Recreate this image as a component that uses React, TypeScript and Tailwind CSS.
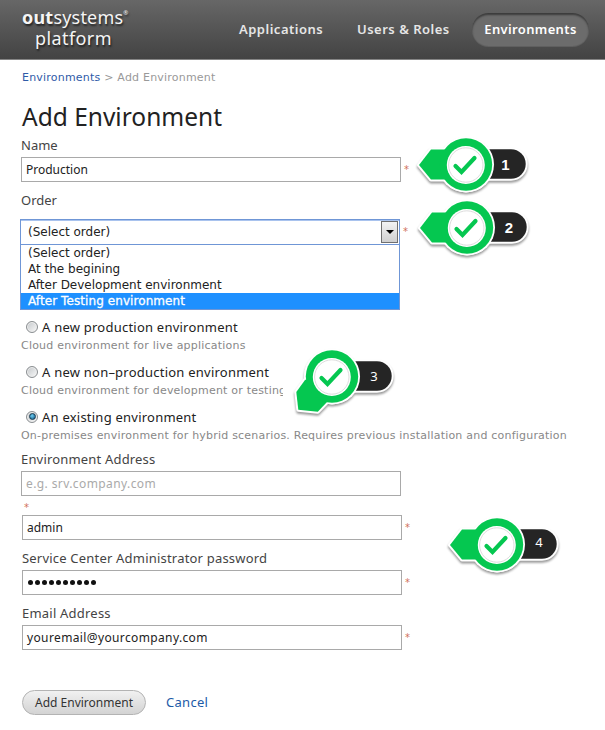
import type { ReactNode } from "react";

const humanist = "font-['Noto_Sans','Open_Sans',sans-serif]";
const verdana = "font-['DejaVu_Sans',sans-serif]";

function Star({ className = "" }: { className?: string }) {
  return <span className={`font-['DejaVu_Sans',sans-serif] text-[10px] leading-3 text-[#d0705a] ${className}`}>*</span>;
}

function Label({ children, className }: { children: ReactNode; className: string }) {
  return <label className={`block h-5 whitespace-nowrap text-[13px] leading-[18px] text-[#444] ${humanist} ${className}`}>{children}</label>;
}

function Field({ value, className, star = true }: { value: ReactNode; className: string; star?: boolean }) {
  return (
    <div className={`flex h-[25px] items-center ${className}`}>
      <div className={`flex h-[25px] w-[380px] items-center border border-[#a9a9a9] bg-white pl-1 text-[12px] whitespace-nowrap text-[#222] ${humanist}`}>
        {value}
      </div>
      {star && <Star className="ml-[3px]" />}
    </div>
  );
}

function Radio({ checked = false }: { checked?: boolean }) {
  return (
    <span className="flex size-3 shrink-0 items-center justify-center rounded-full border border-[#8a8e91] bg-linear-to-br from-[#c3c7ca] to-[#fafafa] shadow-[inset_0_0_0_1px_#eee]">
      {checked && <span className="size-[7px] rounded-full border border-[#15394f] bg-radial-[at_40%_35%] from-[#6fd0f4] to-[#0b4f7d]" />}
    </span>
  );
}

function Choice({ title, hint, checked, hintClass = "" }: { title: string; hint: string; checked?: boolean; hintClass?: string }) {
  return (
    <div className="h-[45px]">
      <div className="flex h-5 items-center pl-[5px]">
        <span className="-mt-[3px] flex"><Radio checked={checked} /></span>
        <span className={`-mt-[2px] ml-1 text-[13px] leading-5 tracking-[0.23px] whitespace-nowrap text-[#222] ${humanist}`}>{title}</span>
      </div>
      <div className={`h-4 overflow-hidden text-[11px] leading-4 tracking-[0.21px] whitespace-nowrap text-[#888] ${verdana} ${hintClass}`}>{hint}</div>
    </div>
  );
}

const arrowLeft = "M5 33 L17 17.5 H36 V47.5 H17 Z";
const arrowDown = "M16.3 48 L18.3 65.7 L37.8 67.7 L47 58 L40 30 L25 36 Z";

/* Step marker: green pointer with a tick, and a dark tab that carries the number */
function Marker({ n, className, down = false, numberX, numberY = 37.5, plain = false }: { n: string; className: string; down?: boolean; numberX: number; numberY?: number; plain?: boolean }) {
  const arrow = down ? arrowDown : arrowLeft;
  return (
    <svg className={`absolute h-[76px] w-[120px] ${className}`} viewBox="0 0 120 76">
      <g className="drop-shadow-[0_2px_1px_rgba(0,0,0,0.4)]">
        <path d="M52 17.3H97A14.7 14.7 0 0 1 97 46.7H52Z" fill="#fff" stroke="#fff" strokeWidth="4" />
        <path d={arrow} fill="#fff" stroke="#fff" strokeWidth="4" strokeLinejoin="round" />
        <circle cx="52" cy="32.5" r="28" fill="#fff" />
      </g>
      <path d="M52 17.3H97A14.7 14.7 0 0 1 97 46.7H52Z" fill="#252525" />
      <circle cx="52" cy="32.5" r="28" fill="#fff" />
      <path d={arrow} fill="#05c750" />
      <circle cx="52" cy="32.5" r="26.2" fill="#05c750" />
      <circle cx="51.8" cy="33" r="19" fill="#fff" />
      <circle cx="51.8" cy="33" r="17.2" fill="none" stroke="#ddd" strokeWidth="1" />
      <path d="M41.5 34L47.5 40L60.5 26" fill="none" stroke="#05c750" strokeWidth="4.2" strokeLinecap="round" />
      <text
        x={numberX}
        y={numberY}
        textAnchor="middle"
        fill="#fff"
        className={plain ? "font-['Noto_Sans',sans-serif] text-[13px]" : "font-['Liberation_Sans',sans-serif] text-[15px] font-bold"}
      >
        {n}
      </text>
    </svg>
  );
}

export default function App() {
  return (
    <div className="relative h-[730px] w-[605px] overflow-hidden bg-white">
      <header className="flex h-[60px] border-b border-[#858585] bg-linear-to-b from-[#676767] to-[#434343]">
        <div className="w-[217px] shrink-0 pt-[7px] pl-[22px] font-['Noto_Sans',sans-serif] text-[18px] leading-[21px] text-[#f5f5f5] [text-shadow:1px_2px_2px_rgba(0,0,0,0.6)]">
          <div className="flex tracking-[0.2px] whitespace-nowrap">
            <b>out</b>systems<span className="mt-[2px] h-2 text-[6px] leading-[8px]">®</span>
          </div>
          <div className="pl-[13px] tracking-[0.4px]">platform</div>
        </div>
        <nav className={`flex shrink-0 items-center text-[13px] font-semibold whitespace-nowrap text-[#e6e6e6] ${humanist}`}>
          <a className="w-[140px] pl-[22px] tracking-[0.5px]">Applications</a>
          <a className="w-[115px] tracking-[0.5px]">Users &amp; Roles</a>
          <a className="flex h-[33px] w-[117px] items-center justify-center rounded-full bg-[#6c6c6c] tracking-[0.35px] text-white shadow-[inset_0_2px_2px_#3c3c3c,0_1px_0_#5f5f5f]">Environments</a>
        </nav>
      </header>
      <main className="pl-[21px]">
        <div className={`mt-[9px] h-4 pl-px text-[11px] leading-[17px] tracking-[0.21px] whitespace-nowrap text-[#999] ${verdana}`}>
          <a className="text-[#2f5ba8]">Environments</a> &gt; Add Environment
        </div>
        <h1 className={`mt-[15px] h-[35px] pl-px text-[24.5px] leading-[34px] whitespace-nowrap text-[#222] ${humanist}`}>Add Environment</h1>
        <Label className="mt-px">Name</Label>
        <Field className="mt-px" value="Production" />
        <Label className="mt-[9px]">Order</Label>

        <div className="mt-[8px] -ml-px h-[91px]">
          <div className="flex h-[26px] items-center">
            <div className={`flex h-[26px] w-[380px] items-center border border-[#6f96d6] pr-px pl-[7px] text-[12px] text-[#222] shadow-[inset_0_1px_0_#a9c3ee] ${verdana}`}>
              <span className="flex-1">(Select order)</span>
              <span className="flex h-[22px] w-[17px] items-center justify-center border border-[#707070] bg-linear-to-b from-[#f3f3f3] to-[#cfcfcf]">
                <span className="border-x-4 border-t-4 border-x-transparent border-t-black" />
              </span>
            </div>
            <Star className="ml-[3px]" />
          </div>
          <ul className={`w-[380px] border border-t-0 border-[#6f96d6] text-[12px] leading-4 whitespace-nowrap text-[#222] *:pl-[7px] ${verdana}`}>
            <li>(Select order)</li>
            <li>At the begining</li>
            <li>After Development environment</li>
            <li className="bg-[#1e90ff] tracking-[0.08px] text-white [-webkit-text-stroke:0.3px_white]">After Testing environment</li>
          </ul>
        </div>

        <div className="mt-[8px]">
          <Choice title="A new production environment" hint="Cloud environment for live applications" />
          <Choice title="A new non–production environment" hint="Cloud environment for development or testing" hintClass="w-[262px]" />
          <Choice title="An existing environment" hint="On-premises environment for hybrid scenarios. Requires previous installation and configuration" checked />
        </div>

        <Label className="-mt-[3px] tracking-[0.18px]">Environment Address</Label>
        <Field className="mt-px" star={false} value={<span className="tracking-[0.4px] text-[#aaa]">e.g. srv.company.com</span>} />
        <div className="flex h-[19px] items-center pl-[3px]"><Star className="mt-1" /></div>
        <div className="pl-px">
          <Field value="admin" className="" />
          <Label className="mt-[9px] tracking-[0.2px]">Service Center Administrator password</Label>
          <Field className="mt-px" value={
            <span className="flex gap-[2.4px] pl-[1.3px]">
              {Array.from({ length: 10 }, (_, i) => <i key={i} className="size-[4.6px] rounded-full bg-[#111]" />)}
            </span>
          } />
          <Label className="mt-[9px] tracking-[0.22px]">Email Address</Label>
          <Field className="mt-px" value={<span className="tracking-[0.37px]">youremail@yourcompany.com</span>} />
          <div className={`mt-10 flex h-[25px] items-center whitespace-nowrap ${humanist}`}>
            <button className="h-[25px] w-[124px] rounded-full border border-[#b3b3b3] bg-linear-to-b from-[#f1f1f1] to-[#d3d3d3] text-[12px] text-[#333]">Add Environment</button>
            <a className="ml-5 text-[13px] tracking-[0.3px] text-[#1d5ba8]">Cancel</a>
          </div>
        </div>
      </main>
      <Marker n="1" className="top-[132px] left-[414px]" numberX={91.5} />
      <Marker n="2" className="top-[195px] left-[415px]" numberX={94} />
      <Marker n="3" className="top-[344px] left-[280px]" numberX={94} numberY={36.5} down plain />
      <Marker n="4" className="top-[512px] left-[445px]" numberX={94} numberY={35} plain />
    </div>
  );
}
